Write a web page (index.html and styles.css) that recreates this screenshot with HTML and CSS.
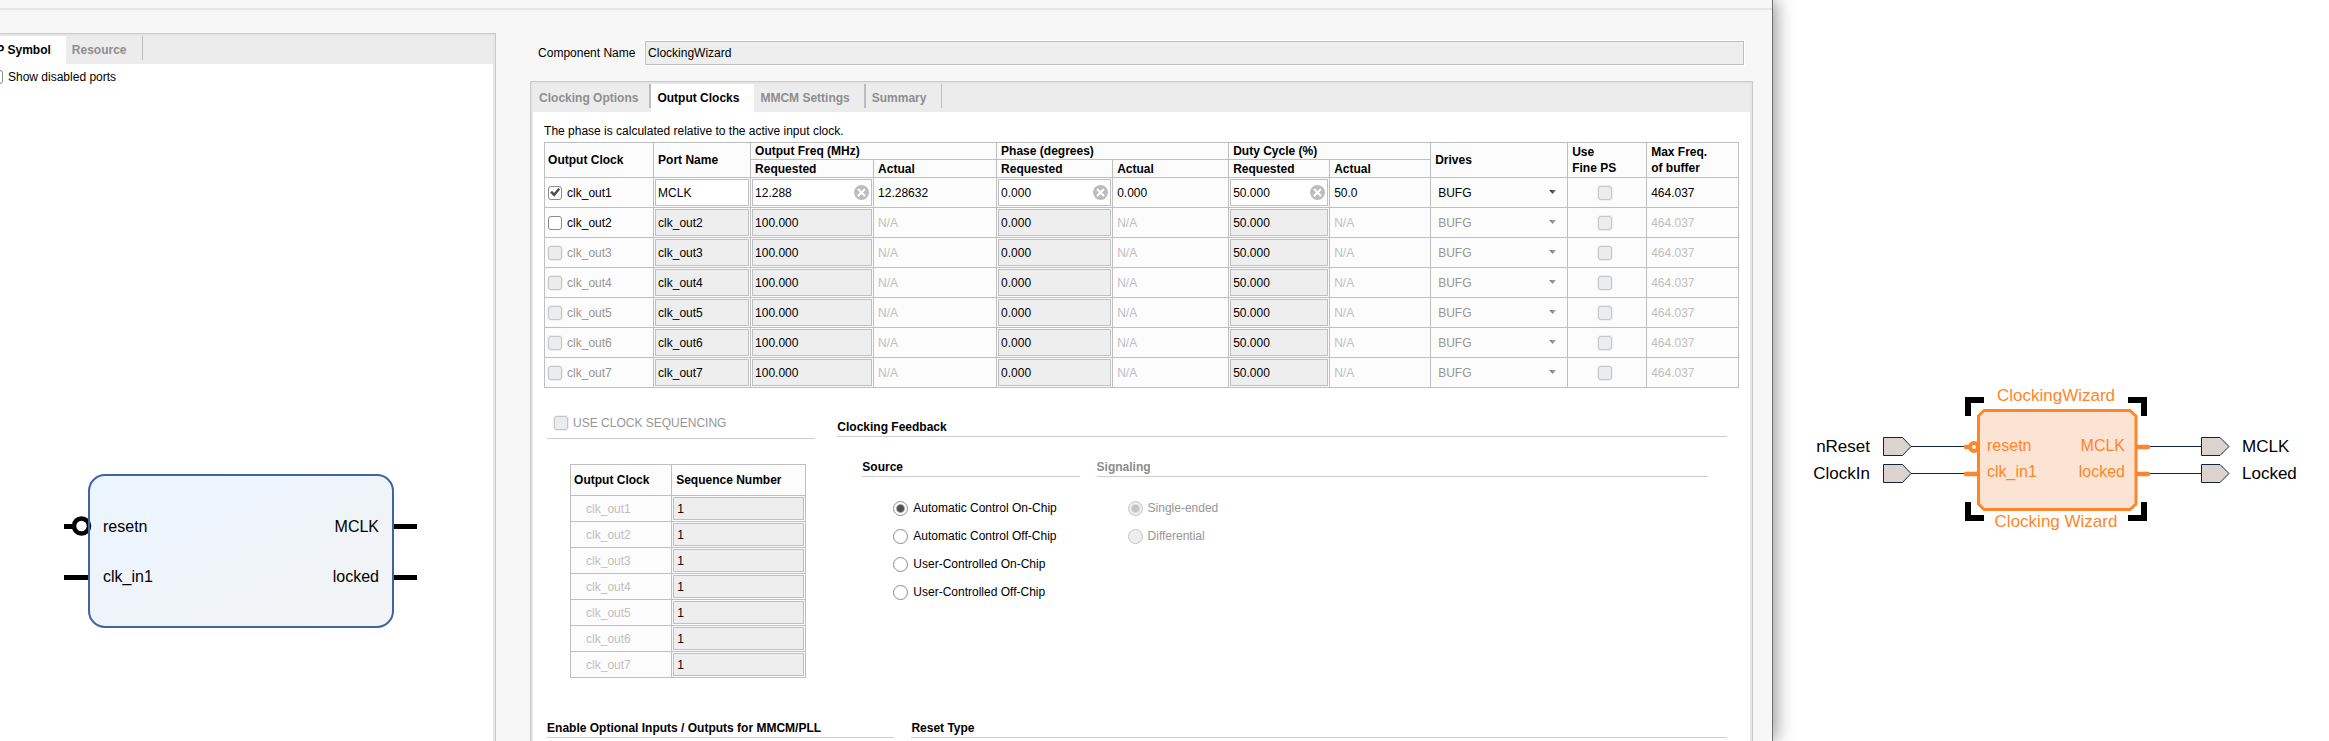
FILE: index.html
```html
<!DOCTYPE html>
<html lang="en">
<head>
<meta charset="utf-8">
<title>Clocking Wizard</title>
<link rel="stylesheet" href="styles.css">
</head>
<body>
<div class="workspace">
  <main class="dialog">
    <div class="dialog-top"></div>
    <div class="dialog-body">
      <section class="panel symbol-panel">
        <div class="tabs" role="tablist">
          <button class="tab active" role="tab" aria-selected="true">IP Symbol</button>
          <button class="tab sep" role="tab">Resource</button>
        </div>
        <div class="panel-content">
          <label class="check ports-toggle"><input type="checkbox">Show disabled ports</label>
          <svg class="symbol" width="354" height="156" viewBox="64 473 354 156" role="img" aria-label="Clocking wizard symbol">
            <defs>
              <linearGradient id="symbolFill" x1="0" y1="0" x2="1" y2="1">
                <stop offset="0" stop-color="#eaf5fd"/>
                <stop offset="0.4" stop-color="#eff4fd"/>
                <stop offset="0.5" stop-color="#eff4f9"/>
                <stop offset="1" stop-color="#f3f4f6"/>
              </linearGradient>
            </defs>
            <path d="M64 526.500H88M64 577.500H88M393 526.500H417M393 577.500H417" stroke="#000" stroke-width="5"/>
            <rect x="89" y="475" width="304" height="152" rx="16" fill="url(#symbolFill)" stroke="#4163a4" stroke-width="2"/>
            <circle cx="81.500" cy="526" r="7.500" fill="#fff" stroke="#000" stroke-width="4.500"/>
            <path d="M89 516V536" stroke="#4163a4" stroke-width="2"/>
            <g class="symbol-text">
              <text x="103" y="532">resetn</text>
              <text x="103" y="582">clk_in1</text>
              <text x="379" y="532" text-anchor="end">MCLK</text>
              <text x="379" y="582" text-anchor="end">locked</text>
            </g>
          </svg>
        </div>
      </section>

      <section class="config">
        <div class="name-row">
          <label for="component-name">Component Name</label>
          <input id="component-name" class="name-input" type="text" value="ClockingWizard" readonly>
        </div>
        <div class="panel">
          <div class="tabs" role="tablist">
            <button class="tab sep wide" role="tab">Clocking Options</button>
            <button class="tab active" role="tab" aria-selected="true">Output Clocks</button>
            <button class="tab sep wide" role="tab">MMCM Settings</button>
            <button class="tab sep" role="tab">Summary</button>
          </div>
          <div class="panel-content clocks">
            <p class="hint">The phase is calculated relative to the active input clock.</p>
            <table class="grid clock-table">
              <colgroup>
                <col class="c-clock"><col class="c-port"><col class="c-freq"><col class="c-freq"><col class="c-phase"><col class="c-phase"><col class="c-duty"><col class="c-duty"><col class="c-drives"><col class="c-fine"><col class="c-max">
              </colgroup>
              <thead>
                <tr>
                  <th rowspan="2" class="first">Output Clock</th>
                  <th rowspan="2">Port Name</th>
                  <th colspan="2">Output Freq (MHz)</th>
                  <th colspan="2">Phase (degrees)</th>
                  <th colspan="2">Duty Cycle (%)</th>
                  <th rowspan="2">Drives</th>
                  <th rowspan="2">Use<br>Fine PS</th>
                  <th rowspan="2">Max Freq.<br>of buffer</th>
                </tr>
                <tr class="sub">
                  <th>Requested</th><th>Actual</th><th>Requested</th><th>Actual</th><th>Requested</th><th>Actual</th>
                </tr>
              </thead>
              <tbody>
                <tr>
                  <td class="first"><label class="check"><input type="checkbox" checked>clk_out1</label></td>
                  <td class="cell"><input class="field" type="text" aria-label="Port name 1" value="MCLK"></td>
                  <td class="cell"><div class="clearable"><input class="field" type="text" aria-label="Frequency 1" value="12.288"><button class="clear" aria-label="Clear frequency"><svg width="15" height="15" viewBox="0 0 15 15"><circle cx="7.500" cy="7.500" r="7.500"/><path d="M4 4L11 11M11 4L4 11"/></svg></button></div></td>
                  <td>12.28632</td>
                  <td class="cell"><div class="clearable"><input class="field" type="text" aria-label="Phase 1" value="0.000"><button class="clear" aria-label="Clear phase"><svg width="15" height="15" viewBox="0 0 15 15"><circle cx="7.500" cy="7.500" r="7.500"/><path d="M4 4L11 11M11 4L4 11"/></svg></button></div></td>
                  <td>0.000</td>
                  <td class="cell"><div class="clearable"><input class="field" type="text" aria-label="Duty cycle 1" value="50.000"><button class="clear" aria-label="Clear duty cycle"><svg width="15" height="15" viewBox="0 0 15 15"><circle cx="7.500" cy="7.500" r="7.500"/><path d="M4 4L11 11M11 4L4 11"/></svg></button></div></td>
                  <td>50.0</td>
                  <td class="cell"><div class="drop"><select aria-label="Drives 1"><option>BUFG</option></select></div></td>
                  <td class="fine"><input type="checkbox" aria-label="Use fine PS 1" disabled></td>
                  <td>464.037</td>
                </tr>
                <tr class="off">
                  <td class="first"><label class="check"><input type="checkbox">clk_out2</label></td>
                  <td class="cell"><input class="field" type="text" aria-label="Port name 2" value="clk_out2" disabled></td>
                  <td class="cell"><input class="field" type="text" aria-label="Frequency 2" value="100.000" disabled></td>
                  <td>N/A</td>
                  <td class="cell"><input class="field" type="text" aria-label="Phase 2" value="0.000" disabled></td>
                  <td>N/A</td>
                  <td class="cell"><input class="field" type="text" aria-label="Duty cycle 2" value="50.000" disabled></td>
                  <td>N/A</td>
                  <td class="cell"><div class="drop"><select aria-label="Drives 2" disabled><option>BUFG</option></select></div></td>
                  <td class="fine"><input type="checkbox" aria-label="Use fine PS 2" disabled></td>
                  <td>464.037</td>
                </tr>
                <tr class="off">
                  <td class="first"><label class="check"><input type="checkbox" disabled>clk_out3</label></td>
                  <td class="cell"><input class="field" type="text" aria-label="Port name 3" value="clk_out3" disabled></td>
                  <td class="cell"><input class="field" type="text" aria-label="Frequency 3" value="100.000" disabled></td>
                  <td>N/A</td>
                  <td class="cell"><input class="field" type="text" aria-label="Phase 3" value="0.000" disabled></td>
                  <td>N/A</td>
                  <td class="cell"><input class="field" type="text" aria-label="Duty cycle 3" value="50.000" disabled></td>
                  <td>N/A</td>
                  <td class="cell"><div class="drop"><select aria-label="Drives 3" disabled><option>BUFG</option></select></div></td>
                  <td class="fine"><input type="checkbox" aria-label="Use fine PS 3" disabled></td>
                  <td>464.037</td>
                </tr>
                <tr class="off">
                  <td class="first"><label class="check"><input type="checkbox" disabled>clk_out4</label></td>
                  <td class="cell"><input class="field" type="text" aria-label="Port name 4" value="clk_out4" disabled></td>
                  <td class="cell"><input class="field" type="text" aria-label="Frequency 4" value="100.000" disabled></td>
                  <td>N/A</td>
                  <td class="cell"><input class="field" type="text" aria-label="Phase 4" value="0.000" disabled></td>
                  <td>N/A</td>
                  <td class="cell"><input class="field" type="text" aria-label="Duty cycle 4" value="50.000" disabled></td>
                  <td>N/A</td>
                  <td class="cell"><div class="drop"><select aria-label="Drives 4" disabled><option>BUFG</option></select></div></td>
                  <td class="fine"><input type="checkbox" aria-label="Use fine PS 4" disabled></td>
                  <td>464.037</td>
                </tr>
                <tr class="off">
                  <td class="first"><label class="check"><input type="checkbox" disabled>clk_out5</label></td>
                  <td class="cell"><input class="field" type="text" aria-label="Port name 5" value="clk_out5" disabled></td>
                  <td class="cell"><input class="field" type="text" aria-label="Frequency 5" value="100.000" disabled></td>
                  <td>N/A</td>
                  <td class="cell"><input class="field" type="text" aria-label="Phase 5" value="0.000" disabled></td>
                  <td>N/A</td>
                  <td class="cell"><input class="field" type="text" aria-label="Duty cycle 5" value="50.000" disabled></td>
                  <td>N/A</td>
                  <td class="cell"><div class="drop"><select aria-label="Drives 5" disabled><option>BUFG</option></select></div></td>
                  <td class="fine"><input type="checkbox" aria-label="Use fine PS 5" disabled></td>
                  <td>464.037</td>
                </tr>
                <tr class="off">
                  <td class="first"><label class="check"><input type="checkbox" disabled>clk_out6</label></td>
                  <td class="cell"><input class="field" type="text" aria-label="Port name 6" value="clk_out6" disabled></td>
                  <td class="cell"><input class="field" type="text" aria-label="Frequency 6" value="100.000" disabled></td>
                  <td>N/A</td>
                  <td class="cell"><input class="field" type="text" aria-label="Phase 6" value="0.000" disabled></td>
                  <td>N/A</td>
                  <td class="cell"><input class="field" type="text" aria-label="Duty cycle 6" value="50.000" disabled></td>
                  <td>N/A</td>
                  <td class="cell"><div class="drop"><select aria-label="Drives 6" disabled><option>BUFG</option></select></div></td>
                  <td class="fine"><input type="checkbox" aria-label="Use fine PS 6" disabled></td>
                  <td>464.037</td>
                </tr>
                <tr class="off">
                  <td class="first"><label class="check"><input type="checkbox" disabled>clk_out7</label></td>
                  <td class="cell"><input class="field" type="text" aria-label="Port name 7" value="clk_out7" disabled></td>
                  <td class="cell"><input class="field" type="text" aria-label="Frequency 7" value="100.000" disabled></td>
                  <td>N/A</td>
                  <td class="cell"><input class="field" type="text" aria-label="Phase 7" value="0.000" disabled></td>
                  <td>N/A</td>
                  <td class="cell"><input class="field" type="text" aria-label="Duty cycle 7" value="50.000" disabled></td>
                  <td>N/A</td>
                  <td class="cell"><div class="drop"><select aria-label="Drives 7" disabled><option>BUFG</option></select></div></td>
                  <td class="fine"><input type="checkbox" aria-label="Use fine PS 7" disabled></td>
                  <td>464.037</td>
                </tr>
              </tbody>
            </table>

            <div class="options">
              <section class="sequencing">
                <div class="rule-row"><label class="check"><input type="checkbox" disabled>USE CLOCK SEQUENCING</label></div>
                <table class="grid seq-table">
                  <colgroup><col class="c-seq-clock"><col class="c-seq-number"></colgroup>
                  <thead><tr><th class="first">Output Clock</th><th>Sequence Number</th></tr></thead>
                  <tbody>
                    <tr class="off"><td>clk_out1</td><td class="cell"><input class="field" type="text" aria-label="Sequence 1" value="1" disabled></td></tr>
                    <tr class="off"><td>clk_out2</td><td class="cell"><input class="field" type="text" aria-label="Sequence 2" value="1" disabled></td></tr>
                    <tr class="off"><td>clk_out3</td><td class="cell"><input class="field" type="text" aria-label="Sequence 3" value="1" disabled></td></tr>
                    <tr class="off"><td>clk_out4</td><td class="cell"><input class="field" type="text" aria-label="Sequence 4" value="1" disabled></td></tr>
                    <tr class="off"><td>clk_out5</td><td class="cell"><input class="field" type="text" aria-label="Sequence 5" value="1" disabled></td></tr>
                    <tr class="off"><td>clk_out6</td><td class="cell"><input class="field" type="text" aria-label="Sequence 6" value="1" disabled></td></tr>
                    <tr class="off"><td>clk_out7</td><td class="cell"><input class="field" type="text" aria-label="Sequence 7" value="1" disabled></td></tr>
                  </tbody>
                </table>
              </section>
              <section class="feedback">
                <h2 class="heading">Clocking Feedback</h2>
                <div class="feedback-groups">
                  <div>
                    <h3 class="heading">Source</h3>
                    <div class="radios">
                      <label class="check"><input type="radio" name="source" checked>Automatic Control On-Chip</label>
                      <label class="check"><input type="radio" name="source">Automatic Control Off-Chip</label>
                      <label class="check"><input type="radio" name="source">User-Controlled On-Chip</label>
                      <label class="check"><input type="radio" name="source">User-Controlled Off-Chip</label>
                    </div>
                  </div>
                  <div>
                    <h3 class="heading muted">Signaling</h3>
                    <div class="radios">
                      <label class="check"><input type="radio" name="signaling" checked disabled>Single-ended</label>
                      <label class="check"><input type="radio" name="signaling" disabled>Differential</label>
                    </div>
                  </div>
                </div>
              </section>
            </div>

            <div class="extras">
              <h2 class="heading">Enable Optional Inputs / Outputs for MMCM/PLL</h2>
              <h2 class="heading">Reset Type</h2>
            </div>
          </div>
        </div>
      </section>
    </div>
  </main>

  <section class="canvas">
    <svg class="diagram" width="500" height="160" viewBox="1801 380 500 160" role="img" aria-label="Block diagram">
      <defs><filter id="soft" x="-10%" y="-10%" width="120%" height="120%"><feGaussianBlur stdDeviation="0.600"/></filter></defs>
      <path d="M1911 446.500H1966M1911 473.500H1966M2148 446.500H2201M2148 473.500H2201" stroke="#10243d"/>
      <g fill="#dcd3cf" stroke="#10243d">
        <path d="M1883.500 437.500H1902.500L1911 446.500L1902.500 455.500H1883.500Z"/>
        <path d="M1883.500 464.500H1902.500L1911 473.500L1902.500 482.500H1883.500Z"/>
        <path d="M2201.500 437.500H2220L2229 446.500L2220 455.500H2201.500Z"/>
        <path d="M2201.500 464.500H2220L2229 473.500L2220 482.500H2201.500Z"/>
      </g>
      <path d="M1968 416V400H1984M2128 400H2144V416M1968 502V518H1984M2128 518H2144V502" fill="none" stroke="#000" stroke-width="6" filter="url(#soft)"/>
      <path d="M1966 447H1977M1966 474H1977M2138 447H2148M2138 474H2148" stroke="#ff8529" stroke-width="4.500" stroke-linecap="round"/>
      <path d="M1984 410.500H2130L2136 416V504L2130 509.500H1984L1978.500 504V416Z" fill="#fce4d5" stroke="#ff8529" stroke-width="3" stroke-linejoin="round"/>
      <circle cx="1974" cy="447" r="4" fill="#fff" stroke="#ff8529" stroke-width="4"/>
      <g class="block-title" text-anchor="middle">
        <text x="2056" y="401">ClockingWizard</text>
        <text x="2056" y="527">Clocking Wizard</text>
      </g>
      <g class="block-pin">
        <text x="1987" y="451">resetn</text>
        <text x="1987" y="477">clk_in1</text>
        <text x="2125" y="451" text-anchor="end">MCLK</text>
        <text x="2125" y="477" text-anchor="end">locked</text>
      </g>
      <g class="port-label">
        <text x="1870" y="452" text-anchor="end">nReset</text>
        <text x="1870" y="479" text-anchor="end">ClockIn</text>
        <text x="2242" y="452">MCLK</text>
        <text x="2242" y="479">Locked</text>
      </g>
    </svg>
  </section>
</div>
</body>
</html>
```
FILE: styles.css
```css
* { box-sizing: border-box; }

body {
  margin: 0;
  font: 12px/16px "Liberation Sans", Arial, sans-serif;
  color: #000;
  background: #fff;
}

button, input, select { font: inherit; color: inherit; margin: 0; }
h2, h3, p { margin: 0; font-size: 12px; }

.workspace { display: flex; height: 100vh; overflow: hidden; }

.dialog {
  flex: 1773 1 0;
  min-width: 0;
  display: flex;
  flex-direction: column;
  background: #f7f7f7;
  border-right: 1px solid #6f7173;
  box-shadow: 2px 0 18px rgba(0, 0, 0, 0.45);
}

.dialog-top { flex: none; height: 10px; border-bottom: 2px solid #e7e7e7; }

.dialog-body {
  flex: 1;
  min-height: 0;
  display: grid;
  grid-template-columns: 496fr 1276fr;
  overflow: hidden;
}

.panel {
  border: 1px solid #c9c9c9;
  border-bottom: 0;
  padding: 2px 2px 0;
  background: #e6e6e6;
  display: flex;
  flex-direction: column;
}

.symbol-panel { margin: 23px 0 0 -20px; }

.tabs { display: flex; height: 28px; background: #ececec; }

.tab {
  border: 0;
  padding: 0 18px 0 6px;
  background: none;
  font-weight: bold;
  color: #8e8e8e;
  position: relative;
}

.tab.active { background: #fff; color: #000; padding-right: 15px; }
.tab.sep { padding-right: 16px; }
.tab.sep.wide:first-child { padding-right: 13px; }

.tab.sep::after {
  content: "";
  position: absolute;
  top: 0;
  right: 0;
  width: 1px;
  height: 24px;
  background: #bdbdbd;
}

.tab.sep.wide::after { width: 2px; }

.panel-content { flex: 1; background: #fff; }
.ports-toggle { padding: 5px 0 0 6px; }
.symbol { display: block; margin: 388px 0 0 81px; }
.symbol-panel .tabs { padding-left: 4px; }
.symbol-text { font-size: 16px; }

.config { padding: 31px 19px 0 34px; display: flex; flex-direction: column; min-width: 0; }
.config > .panel { flex: 1; margin-top: 16px; }

.name-row { display: flex; align-items: center; padding: 0 9px 0 8px; }
.name-row label { flex: 0 0 107px; }

.name-input {
  flex: 1;
  height: 24px;
  border: 1px solid #bfbfbf;
  outline: 1px solid #fff;
  padding: 0 2px;
  background: #eee;
}

.clocks { padding: 11px 11px 0; }
.hint { margin-bottom: 3px; }

.grid { border-collapse: collapse; table-layout: fixed; width: 100%; background: #fcfcfc; }
.grid th, .grid td { border: 1px solid #bfbfbf; padding: 0 0 0 4px; text-align: left; white-space: nowrap; }
.grid .first { padding-left: 3px; }
.grid .cell { padding: 1px; }

.clock-table th { height: 17px; line-height: 16px; }
.clock-table .sub th { height: 18px; }
.clock-table td { height: 30px; }

.c-clock { width: 109px; }
.c-port { width: 97px; }
.c-freq { width: 123px; }
.c-phase { width: 116px; }
.c-duty { width: 101px; }
.c-drives { width: 137px; }
.c-fine { width: 79px; }
.c-max { width: 92px; }

.off td { color: #c0c0c0; }

.field {
  display: block;
  width: 100%;
  height: 27px;
  border: 1px solid #bfbfbf;
  border-radius: 0;
  padding: 0 2px;
  background: #fff;
  color: #000;
}

.field:disabled { background: #eee; }

.clearable, .drop { position: relative; }

.clear {
  position: absolute;
  top: 6px;
  right: 3px;
  width: 15px;
  height: 15px;
  border: 0;
  padding: 0;
  background: none;
}

.clear svg { display: block; fill: #bdbdbd; stroke: none; }
.clear path { stroke: #fff; stroke-width: 2; }

.drop select {
  display: block;
  appearance: none;
  width: 100%;
  height: 27px;
  border: 0;
  padding: 0 6px;
  background: none;
  color: #000;
  opacity: 1;
}

.drop select:disabled { color: #969696; }

.drop::after {
  content: "";
  position: absolute;
  top: 11px;
  right: 10px;
  width: 7px;
  height: 4px;
  background: linear-gradient(90deg, #111, #999);
  clip-path: polygon(0 0, 100% 0, 50% 100%);
  pointer-events: none;
}

.off .drop::after { background: linear-gradient(90deg, #666, #bbb); }

.check { display: flex; align-items: center; gap: 5px; color: #000; }
.check:has(input:disabled) { color: #969696; }

input[type="checkbox"] {
  appearance: none;
  flex: none;
  width: 14px;
  height: 14px;
  border: 1px solid #8c8c8c;
  border-radius: 3px;
  background: #fff;
  position: relative;
}

input[type="checkbox"]:checked::before {
  content: "";
  position: absolute;
  inset: 1px;
  background: #4d4d4d;
  clip-path: polygon(0 50%, 20% 32%, 40% 55%, 82% 5%, 100% 20%, 42% 92%);
}

input[type="checkbox"]:disabled {
  border-color: #c6c6c6;
  background: #ebecee;
  box-shadow: 0 0 0 1px #f0f0f0;
}

.grid .fine { text-align: center; padding: 0 5px 0 0; }
.fine input[type="checkbox"] { display: block; margin: 0 auto; }

input[type="radio"] {
  appearance: none;
  flex: none;
  width: 15px;
  height: 15px;
  border: 1px solid #8c8c8c;
  border-radius: 50%;
  background: #fff;
}

input[type="radio"]:checked { background: radial-gradient(circle, #505050 3px, #fff 5px); }
input[type="radio"]:disabled { border-color: #c6c6c6; background: #ededef; }
input[type="radio"]:disabled:checked { background: radial-gradient(circle, #c4c4c4 3px, #ededef 5px); }

.options {
  display: grid;
  grid-template-columns: 268fr 889fr;
  column-gap: 22px;
  padding: 27px 12px 0 3px;
}

.rule-row { height: 24px; padding-left: 7px; border-bottom: 1px solid #cdcdcd; }

.seq-table { width: auto; margin: 25px 9px 0 23px; }
.sequencing { display: flex; flex-direction: column; }
.c-seq-clock { width: 101px; }
.c-seq-number { width: 134px; }
.seq-table th { height: 31px; }
.seq-table td { height: 26px; padding-left: 15px; }
.seq-table .field { height: 23px; padding: 0 3px; }

.heading { height: 19px; line-height: 18px; border-bottom: 1px solid #cdcdcd; white-space: nowrap; font-weight: bold; }
.heading.muted { color: #8c8c8c; }

.feedback { padding-top: 3px; }

.feedback-groups {
  display: grid;
  grid-template-columns: 217fr 611fr;
  column-gap: 17px;
  padding: 21px 19px 0 25px;
}

.radios { padding: 17px 0 0 31px; }
.radios .check { height: 28px; }

.extras {
  display: grid;
  grid-template-columns: 347fr 815fr;
  column-gap: 17px;
  padding: 41px 12px 0 3px;
}

.canvas { flex: 556 1 0; min-width: 0; padding-top: 380px; display: flex; justify-content: center; }
.diagram { flex: none; display: block; }
.block-title { font-size: 17px; fill: #ff8529; }
.block-pin { font-size: 16px; fill: #ff8529; }
.port-label { font-size: 17px; }
```
